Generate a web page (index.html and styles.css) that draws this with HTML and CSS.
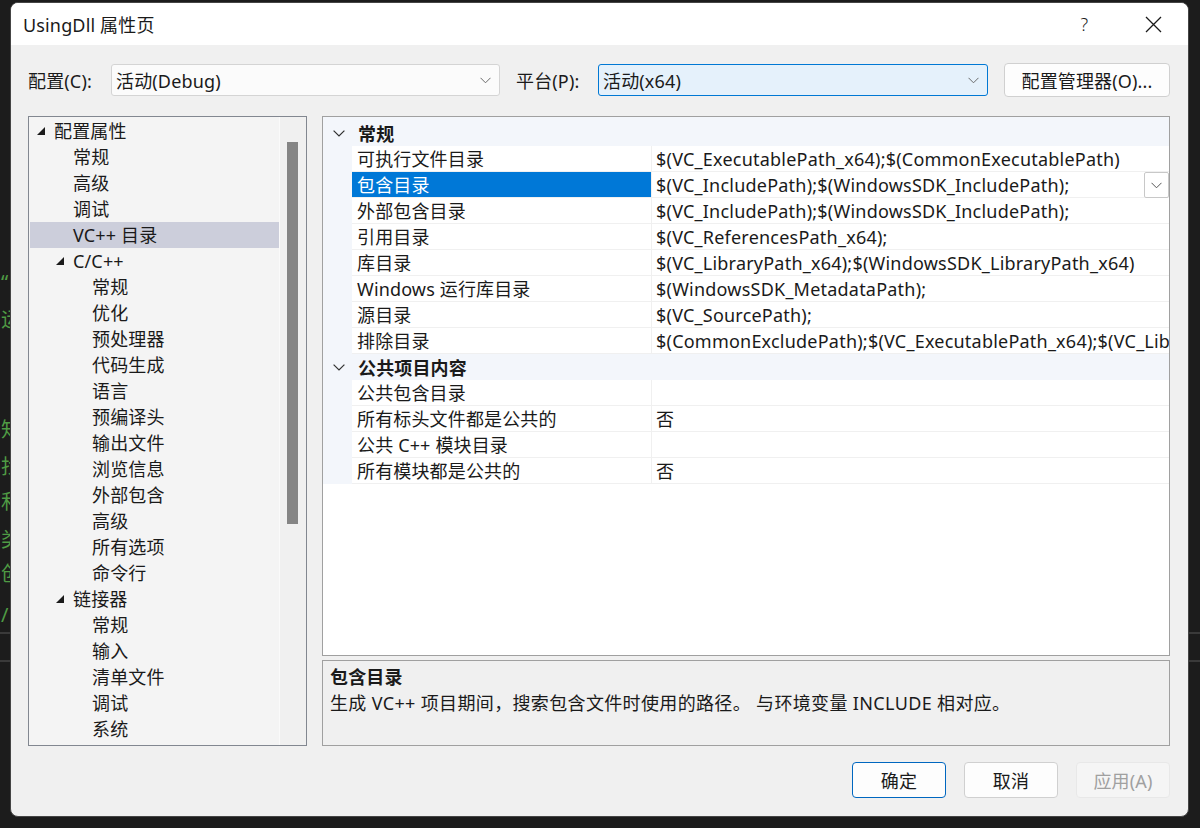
FILE: index.html
```html
<!DOCTYPE html>
<html lang="zh-CN">
<head>
<meta charset="utf-8">
<title>UsingDll 属性页</title>
<link rel="stylesheet" href="styles.css">
</head>
<body>
<div class="desktop">
  <div class="bg-line l1"></div>
  <div class="bg-line l2"></div>
  <span class="glyph g1">“</span>
  <span class="glyph g2">运</span>
  <span class="glyph g3">知</span>
  <span class="glyph g4">找</span>
  <span class="glyph g5">和</span>
  <span class="glyph g6">类</span>
  <span class="glyph g7">创</span>
  <span class="glyph g8">/</span>

  <div class="dialog">
    <div class="titlebar">
      <span class="title">UsingDll 属性页</span>
      <span class="cap-btn help">?</span>
      <span class="cap-btn close"><svg width="17" height="17" viewBox="0 0 17 17"><path d="M1 1L16 16M16 1L1 16" stroke="#1a1a1a" stroke-width="1.3" fill="none"/></svg></span>
    </div>
    <div class="body">
      <div class="config-row">
        <span class="cfg-label lbl1">配置(C):</span>
        <div class="select sel1"><span>活动(Debug)</span><svg class="chev" width="11" height="7" viewBox="0 0 11 7"><path d="M0.5 0.8L5.5 5.8L10.5 0.8" stroke="#6a6a6a" stroke-width="1" fill="none"/></svg></div>
        <span class="cfg-label lbl2">平台(P):</span>
        <div class="select sel2 focused"><span>活动(x64)</span><svg class="chev" width="11" height="7" viewBox="0 0 11 7"><path d="M0.5 0.8L5.5 5.8L10.5 0.8" stroke="#6a6a6a" stroke-width="1" fill="none"/></svg></div>
        <div class="btn cfg-mgr">配置管理器(O)...</div>
      </div>

      <div class="main">
        <div class="tree">
          <div class="tree-list">
            <div class="trow lv0"><svg class="tri" width="8" height="8" viewBox="0 0 8 8"><path d="M8 0V8H0Z" fill="#1a1a1a"/></svg><span>配置属性</span></div>
            <div class="trow lv1"><span>常规</span></div>
            <div class="trow lv1"><span>高级</span></div>
            <div class="trow lv1"><span>调试</span></div>
            <div class="trow lv1 selected"><span>VC++ 目录</span></div>
            <div class="trow lv1 parent"><svg class="tri" width="8" height="8" viewBox="0 0 8 8"><path d="M8 0V8H0Z" fill="#1a1a1a"/></svg><span>C/C++</span></div>
            <div class="trow lv2"><span>常规</span></div>
            <div class="trow lv2"><span>优化</span></div>
            <div class="trow lv2"><span>预处理器</span></div>
            <div class="trow lv2"><span>代码生成</span></div>
            <div class="trow lv2"><span>语言</span></div>
            <div class="trow lv2"><span>预编译头</span></div>
            <div class="trow lv2"><span>输出文件</span></div>
            <div class="trow lv2"><span>浏览信息</span></div>
            <div class="trow lv2"><span>外部包含</span></div>
            <div class="trow lv2"><span>高级</span></div>
            <div class="trow lv2"><span>所有选项</span></div>
            <div class="trow lv2"><span>命令行</span></div>
            <div class="trow lv1 parent"><svg class="tri" width="8" height="8" viewBox="0 0 8 8"><path d="M8 0V8H0Z" fill="#1a1a1a"/></svg><span>链接器</span></div>
            <div class="trow lv2"><span>常规</span></div>
            <div class="trow lv2"><span>输入</span></div>
            <div class="trow lv2"><span>清单文件</span></div>
            <div class="trow lv2"><span>调试</span></div>
            <div class="trow lv2"><span>系统</span></div>
          </div>
          <div class="tree-scroll"><div class="thumb"></div></div>
        </div>

        <div class="right">
          <div class="grid">
            <div class="cat first"><svg class="cchev" width="12" height="7" viewBox="0 0 12 7"><path d="M0.6 0.6L6 6L11.4 0.6" stroke="#333" stroke-width="1.2" fill="none"/></svg><span>常规</span></div>
            <div class="prow"><div class="gut"></div><div class="pl">可执行文件目录</div><div class="pv">$(VC_ExecutablePath_x64);$(CommonExecutablePath)</div></div>
            <div class="prow sel"><div class="gut"></div><div class="pl">包含目录</div><div class="pv">$(VC_IncludePath);$(WindowsSDK_IncludePath);</div>
              <div class="dd-btn"><svg width="11" height="7" viewBox="0 0 11 7"><path d="M0.5 0.8L5.5 5.8L10.5 0.8" stroke="#555" stroke-width="1" fill="none"/></svg></div></div>
            <div class="prow"><div class="gut"></div><div class="pl">外部包含目录</div><div class="pv">$(VC_IncludePath);$(WindowsSDK_IncludePath);</div></div>
            <div class="prow"><div class="gut"></div><div class="pl">引用目录</div><div class="pv">$(VC_ReferencesPath_x64);</div></div>
            <div class="prow"><div class="gut"></div><div class="pl">库目录</div><div class="pv">$(VC_LibraryPath_x64);$(WindowsSDK_LibraryPath_x64)</div></div>
            <div class="prow"><div class="gut"></div><div class="pl">Windows 运行库目录</div><div class="pv">$(WindowsSDK_MetadataPath);</div></div>
            <div class="prow"><div class="gut"></div><div class="pl">源目录</div><div class="pv">$(VC_SourcePath);</div></div>
            <div class="prow"><div class="gut"></div><div class="pl">排除目录</div><div class="pv">$(CommonExcludePath);$(VC_ExecutablePath_x64);$(VC_LibraryPath_x64)</div></div>
            <div class="cat"><svg class="cchev" width="12" height="7" viewBox="0 0 12 7"><path d="M0.6 0.6L6 6L11.4 0.6" stroke="#333" stroke-width="1.2" fill="none"/></svg><span>公共项目内容</span></div>
            <div class="prow"><div class="gut"></div><div class="pl">公共包含目录</div><div class="pv"></div></div>
            <div class="prow"><div class="gut"></div><div class="pl">所有标头文件都是公共的</div><div class="pv">否</div></div>
            <div class="prow"><div class="gut"></div><div class="pl">公共 C++ 模块目录</div><div class="pv"></div></div>
            <div class="prow"><div class="gut"></div><div class="pl">所有模块都是公共的</div><div class="pv">否</div></div>
          </div>
          <div class="desc">
            <div class="desc-title">包含目录</div>
            <div class="desc-text">生成 VC++ 项目期间，搜索包含文件时使用的路径。 与环境变量 INCLUDE 相对应。</div>
          </div>
        </div>
      </div>

      <div class="buttons">
        <div class="btn dlg-btn default">确定</div>
        <div class="btn dlg-btn">取消</div>
        <div class="btn dlg-btn disabled">应用(A)</div>
      </div>
    </div>
  </div>
</div>
</body>
</html>
```

FILE: styles.css
```css
* { box-sizing: border-box; }
html, body { margin: 0; padding: 0; }
body {
  width: 1200px;
  height: 828px;
  overflow: hidden;
  background: #1c1c1c;
  font-family: "Noto Sans", "Noto Sans CJK SC", sans-serif;
  font-size: 18px;
  letter-spacing: 0.15px;
  color: #1a1a1a;
}
.desktop { position: relative; width: 1200px; height: 828px; }

.bg-line { position: absolute; left: 0; right: 0; height: 2px; background: #3a3a3a; }
.l1 { top: 632px; }
.l2 { top: 660px; }
.glyph { position: absolute; left: 1px; color: #4f9b44; font-size: 20px; line-height: 24px; }
.g1 { top: 270px; }
.g2 { top: 308px; }
.g3 { top: 418px; }
.g4 { top: 455px; }
.g5 { top: 490px; }
.g6 { top: 528px; }
.g7 { top: 562px; }
.g8 { top: 603px; }

.dialog {
  position: absolute;
  left: 10px;
  top: 2px;
  width: 1179px;
  height: 815px;
  border: 1px solid #454545;
  border-radius: 8px;
  background: #f0f0f0;
  overflow: hidden;
  display: flex;
  flex-direction: column;
}

.titlebar {
  height: 42px;
  flex: none;
  background: #ffffff;
  display: flex;
  align-items: center;
  padding-left: 12px;
}
.title { flex: 1; font-size: 18px; color: #1a1a1a; }
.cap-btn {
  width: 69px;
  height: 42px;
  display: flex;
  align-items: center;
  justify-content: center;
  color: #1a1a1a;
}
.help { font-size: 18px; font-weight: 300; }

.body {
  flex: 1;
  padding: 18px 18px 0 17px;
  display: flex;
  flex-direction: column;
}

.config-row { display: flex; align-items: center; height: 34px; }
.cfg-label { flex: none; }
.lbl1 { width: 83px; }
.lbl2 { width: 82px; margin-left: 16px; }
.select {
  height: 32px;
  display: flex;
  align-items: center;
  justify-content: space-between;
  padding: 0 8px 0 4px;
  background: #fbfbfb;
  border: 1px solid #d4d4d4;
  border-radius: 3px;
}
.sel1 { width: 389px; }
.sel2 { width: 390px; }
.select.focused { background: #e5f1fb; border-color: #0078d4; }
.btn {
  display: flex;
  align-items: center;
  justify-content: center;
  border: 1px solid #d0d0d0;
  border-radius: 4px;
  background: #fdfdfd;
}
.cfg-mgr { width: 166px; height: 34px; margin-left: 16px; }

.main { display: flex; gap: 15px; margin-top: 19px; height: 630px; }

.tree {
  width: 279px;
  flex: none;
  border: 1px solid #828790;
  background: #f4f4f4;
  display: flex;
}
.tree-list { width: 250px; padding-top: 1px; }
.trow {
  height: 26px;
  line-height: 26px;
  display: flex;
  align-items: center;
  white-space: nowrap;
}
.trow .tri { flex: none; margin-right: 9px; }
.lv0 { padding-left: 8px; }
.lv1 { padding-left: 44px; }
.lv1.parent { padding-left: 27px; }
.lv2 { padding-left: 63px; }
.trow.selected { background: #cccedb; margin-left: 1px; padding-left: 43px; }
.tree-scroll {
  width: 27px;
  background: #f0f0f0;
  border-left: 1px solid #fafafa;
  padding: 25px 0 0 7px;
}
.thumb { width: 11px; height: 382px; background: #858585; }

.right { flex: 1; display: flex; flex-direction: column; gap: 4px; }
.grid {
  height: 540px;
  border: 1px solid #a0a0a0;
  background: #ffffff;
  overflow: hidden;
}
.cat {
  height: 26px;
  background: #f3f6fb;
  display: flex;
  align-items: center;
  font-weight: 700;
}
.cat.first { height: 29px; padding-top: 3px; }
.cchev { margin-left: 10px; margin-right: 13px; }
.prow {
  position: relative;
  display: grid;
  grid-template-columns: 29px 300px 1fr;
  height: 26px;
  line-height: 26px;
}
.gut { background: #f3f6fb; }
.pl {
  padding-left: 5px;
  border-right: 1px solid #f0f0f0;
  border-bottom: 1px solid #f0f0f0;
  white-space: nowrap;
  overflow: hidden;
}
.pv {
  padding-left: 4px;
  border-bottom: 1px solid #f0f0f0;
  white-space: nowrap;
  overflow: hidden;
  letter-spacing: 0.22px;
}
.prow.sel .pl { background: #0078d7; color: #ffffff; }
.dd-btn {
  position: absolute;
  right: 0;
  top: 0;
  width: 25px;
  height: 26px;
  border: 1px solid #c8c8c8;
  border-radius: 2px;
  background: #ffffff;
  display: flex;
  align-items: center;
  justify-content: center;
}

.desc {
  height: 86px;
  border: 1px solid #a0a0a0;
  background: #f0f0f0;
  padding: 3px 7px 0;
}
.desc-title { font-weight: 700; line-height: 26px; }
.desc-text { line-height: 26px; letter-spacing: 0.35px; }

.buttons {
  display: flex;
  justify-content: flex-end;
  gap: 18px;
  margin-top: 16px;
}
.dlg-btn { width: 94px; height: 36px; }
.dlg-btn.default { border-color: #0067c0; }
.dlg-btn.disabled { background: #f5f5f5; border-color: #e8e8e8; color: #a0a0a0; }
```
